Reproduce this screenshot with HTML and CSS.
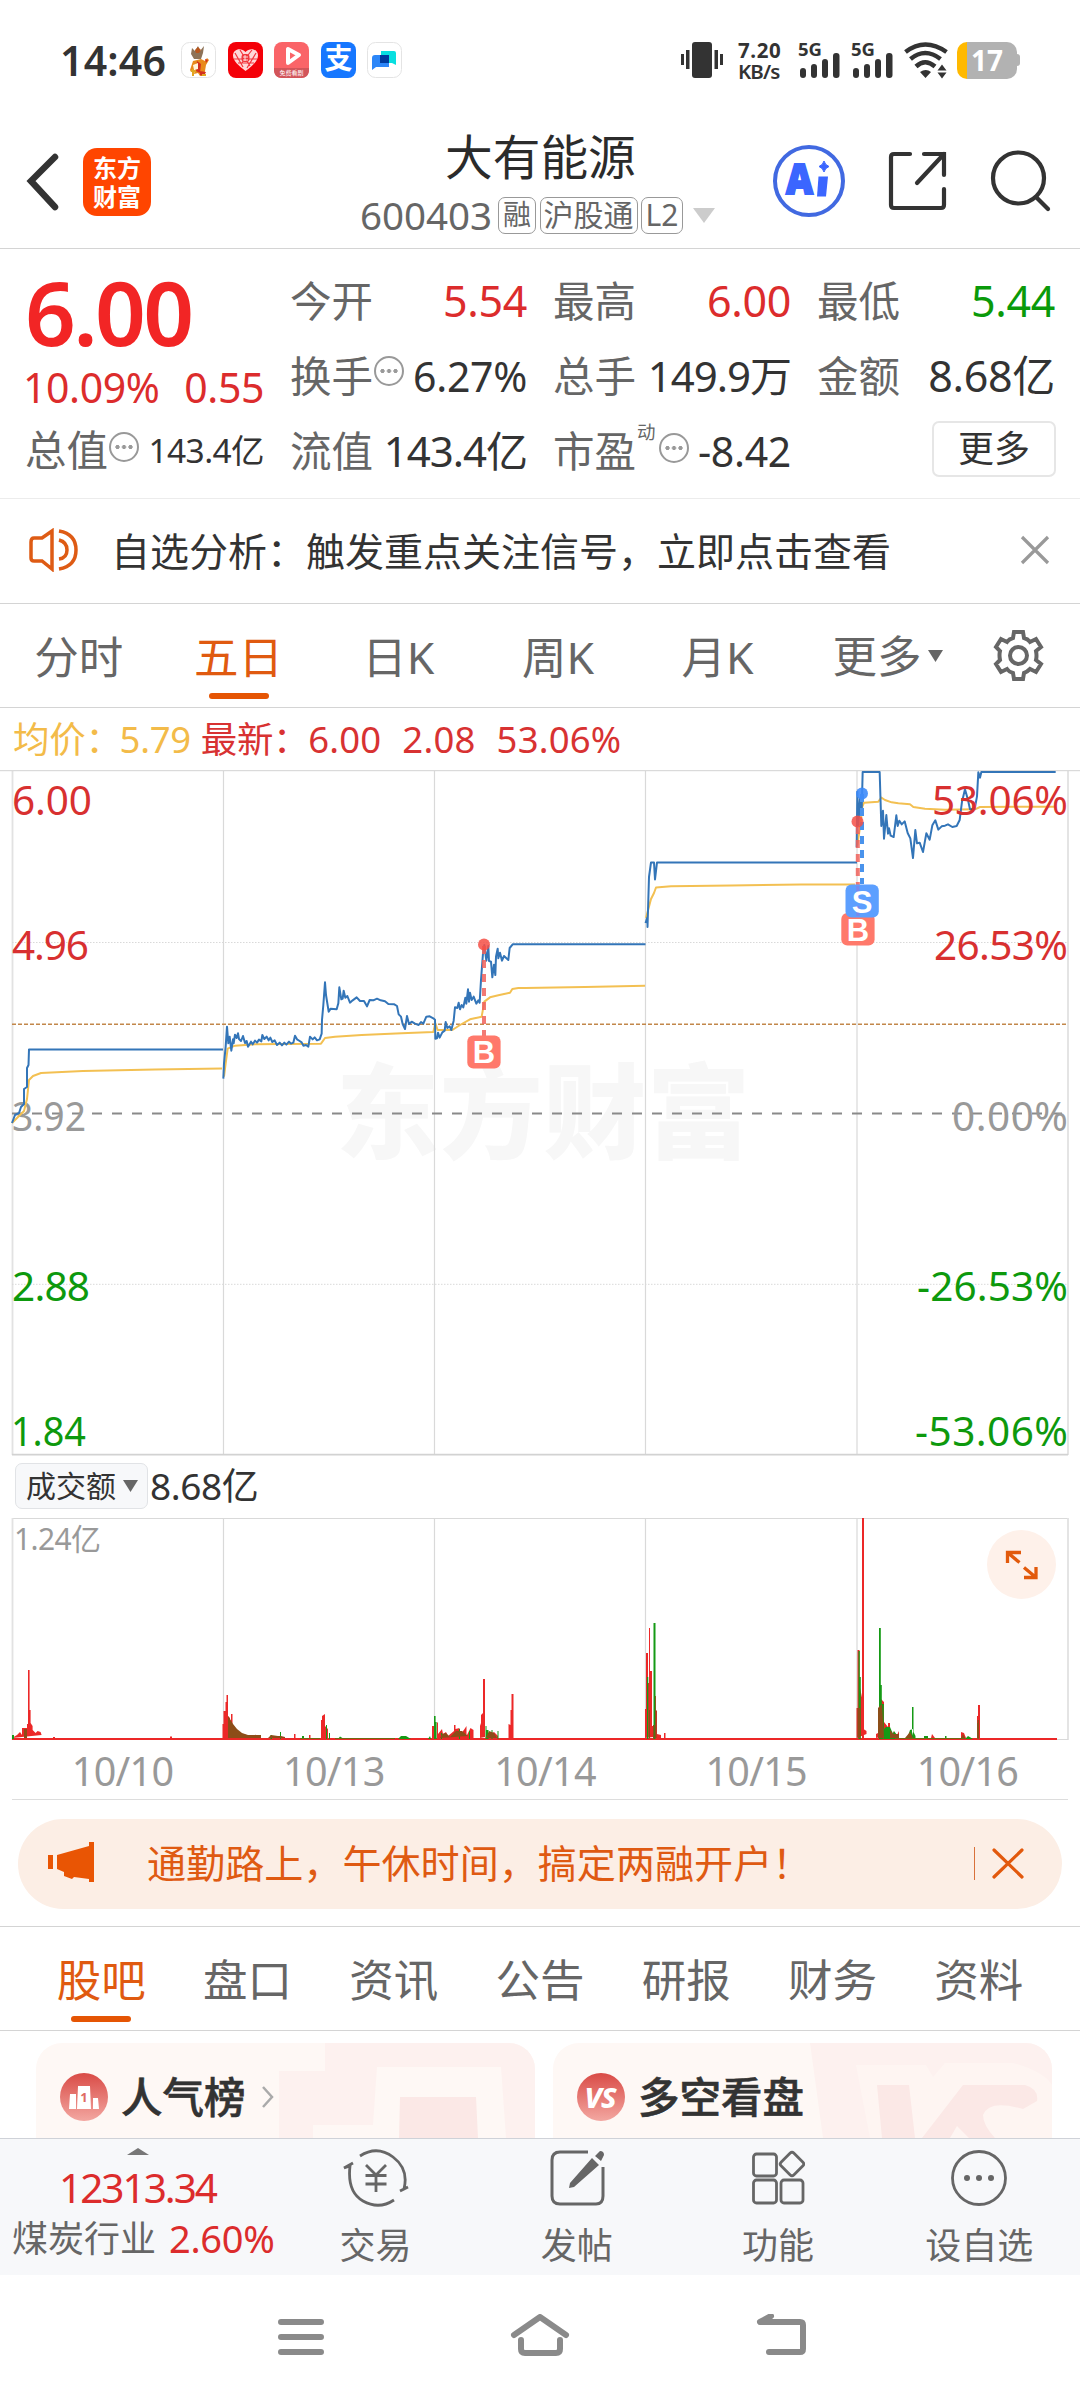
FILE: index.html
```html
<!DOCTYPE html>
<html lang="zh-CN">
<head>
<meta charset="utf-8">
<title>大有能源 600403</title>
<link rel="stylesheet" href="styles.css">
</head>
<body>
<div class="status">
  <span class="clock">14:46</span>
  <div class="apps">
    <svg width="35" height="36" viewBox="0 0 35 36"><rect x=".5" y=".5" width="34" height="35" rx="8" fill="#fff" stroke="#e4e4e4"/><path d="M11 6l3 3 3-5 2 5 4-5-1 7-2 6h-7l-3-5z" fill="#8d7257"/><path d="M14 8l3-3 3 3-2 3h-3z" fill="#b8571d"/><path d="M12 19l8-2 4 2 2-3 2 2-3 5-1 6-1 5h-4l-2-3-4 1 1-6-4 4-1-2z" fill="#e88a1c"/><path d="M16 19l4 3-1 9-4-2zM24 17l3 1-2 3M19 29l6 1-2 4-4-1z" fill="#d2301f"/><path d="M12 23l5-2v6l-4 1z" fill="#fff4dd"/><path d="M10 29h5M12 27v7M21 33h4" stroke="#e0a623" stroke-width="2"/></svg>
    <svg width="35" height="36" viewBox="0 0 35 36"><rect width="35" height="36" rx="8" fill="#f40008"/><path d="M17.500 29C11 24 5 19 5 13.500 5 7 13 5 17.500 10 22 5 30 7 30 13.500 30 19 24 24 17.500 29z" fill="#ffd8d8"/><path d="M7 11l8 14M12 8l10 16M28 11l-9 15M24 8L13 22M6 17h23M10 21h16" stroke="#f2353c" stroke-width="1.200"/><rect x="13.500" y="12" width="8" height="8" rx="3" fill="#f1373c"/><path d="M15 15h5M15 18h5M17 13v6" stroke="#fff" stroke-width=".8"/></svg>
    <svg width="35" height="36" viewBox="0 0 35 36"><rect width="35" height="36" rx="8" fill="#fa6468"/><path d="M0 26h35v2c0 5-3 8-8 8H8c-5 0-8-3-8-8z" fill="#d2555a"/><path d="M14 7v14l11-8z" fill="none" stroke="#fff" stroke-width="4" stroke-linejoin="round"/><text x="17.500" y="33" class="micro">免费看剧</text></svg>
    <svg width="35" height="36" viewBox="0 0 35 36"><rect width="35" height="36" rx="8" fill="#1677ff"/><text x="17.500" y="27" class="zhi">支</text></svg>
    <svg width="35" height="36" viewBox="0 0 35 36"><rect x=".5" y=".5" width="34" height="35" rx="8" fill="#fff" stroke="#e4e4e4"/><path d="M14 9h13q2 0 2 2v12l-4-2H14z" fill="#08dfe0"/><path d="M8 13h14v12H9l-4 3V16q0-3 3-3z" fill="#2c86f8"/><path d="M13 13h9v8h-9z" fill="#003a9c"/></svg>
  </div>
  <div class="signals">
    <svg width="42" height="36" viewBox="0 0 42 36" fill="#333"><rect x="11" width="20" height="36" rx="3"/><path d="M0 12h3v11H0zM5 8h3.500v19H5zM33.500 8H37v19h-3.500zM39 12h3v11h-3z"/></svg>
    <div class="speed"><span>7.20</span><span>KB/s</span></div>
    <svg class="cell" width="43" height="36" viewBox="0 0 43 36" fill="#333"><text x="0" y="13.500" class="g5">5G</text><rect x="2" y="26" width="6" height="10" rx="3"/><rect x="13" y="22" width="6" height="14" rx="3"/><rect x="24" y="17" width="6" height="19" rx="3"/><rect x="35" y="11" width="6.500" height="25" rx="3"/></svg>
    <svg class="cell" width="43" height="36" viewBox="0 0 43 36" fill="#333"><text x="0" y="13.500" class="g5">5G</text><rect x="2" y="26" width="6" height="10" rx="3"/><rect x="13" y="22" width="6" height="14" rx="3"/><rect x="24" y="17" width="6" height="19" rx="3"/><rect x="35" y="11" width="6.500" height="25" rx="3"/></svg>
    <svg width="44" height="37" viewBox="0 0 44 37" fill="none" stroke="#333" stroke-width="4.500"><path d="M1.500 10Q21-5 42.500 10M6.500 17Q21 5 36.500 17M12 24.500Q21 16 31 24.500"/><path d="M16 30q6-4 11 0l-5.500 6zM33.500 28.500l4.500-6 4.500 6zM33.500 30.500l4.500 6 4.500-6z" fill="#333" stroke="none"/></svg>
    <div class="battery"><span>17</span></div>
  </div>
</div>

<header class="header">
  <svg class="back" width="34" height="58" viewBox="0 0 34 58"><path d="M29 4L5 28l24 26" fill="none" stroke="#333" stroke-width="6.500" stroke-linecap="round"/></svg>
  <div class="logo"><span>东方</span><span>财富</span></div>
  <div class="title">
    <h1>大有能源</h1>
    <div class="code"><span class="num">600403</span><span class="chip rong">融</span><span class="chip hgt">沪股通</span><span class="chip l2">L2</span><svg width="22" height="15" viewBox="0 0 22 15"><path d="M0 0h22L11 15z" fill="#ccc"/></svg></div>
  </div>
  <div class="actions">
    <svg width="74" height="76" viewBox="0 0 74 76"><circle cx="37" cy="38" r="34" fill="none" stroke="#4169e1" stroke-width="4"/><text class="ai" x="14" y="51" textLength="27" lengthAdjust="spacingAndGlyphs">A</text><path d="M46.500 33.500h9.500l-2 20h-9z" fill="#3b66ff"/><path d="M52 18q1 4 5 5.500-4 1.500-5 5.500-1-4-5-5.500 4-1.500 5-5.500z" fill="#3b66ff" stroke="#3b66ff"/></svg>
    <svg width="60" height="60" viewBox="0 0 60 60" fill="none" stroke="#333" stroke-width="4.200" stroke-linecap="round"><path d="M22 3H6q-3 0-3 3v48q0 3 3 3h47q3 0 3-3V38M36 3h20v21M56 3L29 32"/></svg>
    <svg width="62" height="64" viewBox="0 0 62 64" fill="none" stroke="#333" stroke-width="4.200" stroke-linecap="round"><circle cx="28.500" cy="29" r="25.500"/><path d="M46.500 48.500L58 60"/></svg>
  </div>
</header>

<section class="quote">
  <div class="q-main">
    <div class="price">6.00</div>
    <div class="change"><span>10.09%</span><span>0.55</span></div>
    <div class="cell-row"><span class="lbl">总值</span><i class="info"></i><b class="v34">143.4亿</b></div>
  </div>
  <div class="q-col">
    <div class="cell-row"><span class="lbl">今开</span><b class="red">5.54</b></div>
    <div class="cell-row"><span class="lbl">换手</span><i class="info up"></i><b class="v41">6.27%</b></div>
    <div class="cell-row"><span class="lbl">流值</span><b class="tight">143.4亿</b></div>
  </div>
  <div class="q-col">
    <div class="cell-row"><span class="lbl">最高</span><b class="red">6.00</b></div>
    <div class="cell-row"><span class="lbl">总手</span><b class="tight">149.9万</b></div>
    <div class="cell-row"><span class="lbl">市盈</span><sup>动</sup><i class="info"></i><b class="v41">-8.42</b></div>
  </div>
  <div class="q-col">
    <div class="cell-row"><span class="lbl">最低</span><b class="green">5.44</b></div>
    <div class="cell-row"><span class="lbl">金额</span><b>8.68亿</b></div>
    <div class="cell-row"><span class="more">更多</span></div>
  </div>
</section>

<section class="notice">
  <svg width="50" height="44" viewBox="0 0 50 44" fill="none" stroke="#de5b14" stroke-width="3.500"><path d="M23 3v38l-10-8H5q-3 0-3-3V14q0-4 3-4h8zM30 3q17 3 17 19T30 41M30 12q8 2 8 10t-8 9"/></svg>
  <span class="notice-text">自选分析：触发重点关注信号，立即点击查看</span>
  <svg width="30" height="30" viewBox="0 0 30 30"><path d="M2 2l26 26M28 2L2 28" stroke="#999" stroke-width="3.200"/></svg>
</section>

<nav class="period">
  <span>分时</span><span class="on">五日</span><span>日K</span><span>周K</span><span>月K</span>
  <span class="p-more">更多<svg width="15" height="12" viewBox="0 0 15 12"><path d="M0 0h15L7.500 12z" fill="#666"/></svg></span>
  <svg class="gear" width="54" height="54" viewBox="0 0 54 54" fill="none" stroke="#666" stroke-width="4"><path d="M23 3h9l1 6q4 1 6 4l6-3 5 8-5 4q1 5 0 9l5 4-5 8-6-3q-3 3-6 4l-1 6h-9l-1-6q-4-1-6-4l-6 3-5-8 4-4q-1-5 0-9l-4-4 5-8 6 3q2-3 6-4z"/><circle cx="27.500" cy="26.500" r="8.500"/></svg>
</nav>

<div class="legend"><span class="avg">均价：</span><span class="avg v">5.79</span><span class="n">最新：</span><span>6.00</span><span>2.08</span><span>53.06%</span></div>

<svg class="chart" width="1080" height="693" viewBox="0 770 1080 693">
  <text class="mark" x="336" y="1151" textLength="414">东方财富</text>
  <g stroke="#d9d9d9" fill="none">
    <path d="M223.500 771v684M434.500 771v684M645.500 771v684M857 771v684" stroke-width="1.200"/>
    <path d="M12.500 771v684M1068 771v684" stroke-width="1.800" stroke="#e2e2e2"/>
    <path d="M0 770.700h1080" stroke="#d2d2d2"/>
    <path d="M12 1454.700h1056" stroke-width="1.800" stroke="#d2d2d2"/>
    <path d="M12 942.500h1056M12 1284.300h1056" stroke-dasharray="1.500 1.500"/>
  </g>
  <path d="M12 1113.500h1056" stroke="#8a8a8a" stroke-width="2" stroke-dasharray="10 10" fill="none"/>
  <path d="M12 1024.300h1056" stroke="#c2874a" stroke-width="1.500" stroke-dasharray="4 2" fill="none"/>
  <g class="lab red-t">
    <text x="12" y="815" textLength="80">6.00</text><text x="12" y="960" textLength="77">4.96</text>
  </g>
  <g class="lab gray-t"><text x="12" y="1131" textLength="74" lengthAdjust="spacingAndGlyphs">3.92</text></g>
  <g class="lab green-t"><text x="12" y="1301" textLength="78">2.88</text><text x="11" y="1446" textLength="75" lengthAdjust="spacingAndGlyphs">1.84</text></g>

  <g class="avgline">
    <path d="M12 1123l6-6 6-6 3-12 2-19 4-4 8-3 42-2 72-1.500 67-1"/>
    <g transform="translate(215 930) scale(.33333)">
      <path d="M27 440L32 400 38 356 60 347 120 343 200 342 318 341 330 324 360 320 440 315 560 310 655 306 661 280 668 300 712 300 735 285 765 268 800 260 808 215 825 202 850 196 885 188 892 177 910 174 930 174"/>
    </g>
    <path d="M525 988l60-1 60-1.300M646 918l5-19 3-6 2-5.500 15-1.200 60-.8 70-1 54 0"/>
    <g transform="translate(845 765) scale(.33333)">
      <path d="M37 240L46 180 52 125 57 113 100 110 109 98 120 105 140 112 160 115 195 118 205 126 240 131 300 134 390 133 405 126 632 125"/>
    </g>
  </g>
  <g class="priceline">
    <path d="M12 1123l3-8 4-2 2-6 3-3 0-15 3-2 0-19 1.500-3 .5-15.500h194"/>
    <g transform="translate(215 930) scale(.33333)">
      <path d="M25 446L27 400 32 350 36 290 40 340 44 320 49 362 54 328 56 340 60 314 65 324 69 310 72 327 78 333 84 318 90 339 95 333 99 350 108 335 113 343 120 332 126 338 132 329 139 334 142 315 148 327 155 320 161 331 166 323 172 336 179 331 186 345 194 338 201 346 208 338 214 344 222 335 228 341 235 338 240 317 246 328 254 333 260 337 265 347 273 345 280 350 285 320 293 328 299 322 306 331 314 328 320 311 321 270 325 225 330 157 333 195 341 245 347 236 365 238 370 220 373 172 379 208 383 206 386 182 391 203 397 198 405 218 413 211 425 202 435 213 447 213 456 229 464 210 475 211 486 206 497 211 510 214 520 222 538 223 546 228 551 253 558 260 563 282 570 297 576 258 582 282 590 275 600 281 611 285 618 276 625 281 634 260 644 259 655 265 660 269 661 326 666 325 669 308 674 323 682 307 689 302 692 276 697 294 704 289 709 300 716 272 720 232 727 234 731 218 735 238 740 225 745 232 751 203 754 221 759 178 762 215 765 188 770 210 776 200 784 221 790 211 794 218 798 150 804 70 808 45 814 92 820 48 822 93 828 95 832 142 837 104 841 135 843 80 848 56 850 85 855 68 861 92 867 78 880 90 884 54 893 43 930 43"/>
    </g>
    <path d="M525 944.300h120.500M645.500 923l2-6v10l1.500-50 2-14.500h3l1 17 2-17h200"/>
    <g transform="translate(845 765) scale(.33333)">
      <path d="M35 247L37 80 40 180 45 100 50 140 53 21 104 21 109 183 114 137 117 221 124 150 129 206 132 190 137 212 146 216 154 151 158 183 163 167 170 178 179 169 188 204 196 220 204 279 211 195 216 235 224 233 234 261 244 205 254 224 262 181 271 166 280 194 290 184 300 182 309 178 322 186 335 183 344 165 351 110 360 73 369 105 375 133 389 132 396 94 400 22 405 38 409 21 632 21"/>
    </g>
  </g>
  <g class="lab red-t" text-anchor="end">
    <text x="1068" y="815" textLength="136">53.06%</text><text x="1068" y="960" textLength="134">26.53%</text>
  </g>
  <g class="lab gray-t" text-anchor="end"><text x="1068" y="1131" textLength="116">0.00%</text></g>
  <g class="lab green-t" text-anchor="end"><text x="1068" y="1301" textLength="151">-26.53%</text><text x="1068" y="1446" textLength="153">-53.06%</text></g>
  <g stroke-width="4" stroke-dasharray="8 6">
    <path d="M484 946v90M857.800 826v60" stroke="#f0635c" opacity=".85"/><path d="M862 794v90" stroke="#4a93ec"/>
  </g>
  <circle cx="484" cy="944.500" r="6" fill="#f54f45" opacity=".85"/>
  <circle cx="857.500" cy="821.500" r="6" fill="#f54f45" opacity=".85"/>
  <circle cx="862" cy="793.500" r="6" fill="#3d8bfa" opacity=".9"/>
  <g class="badge">
    <rect x="467.300" y="1035.500" width="33.300" height="33" rx="6" fill="#ff796b"/><text x="484" y="1063">B</text>
    <rect x="841.300" y="913" width="33.300" height="32.500" rx="6" fill="#ff796b"/><text x="858" y="941">B</text>
    <rect x="845.500" y="884.500" width="33.300" height="33" rx="6" fill="#5c9fff"/><path d="M857.800 886v10M857.800 906v10" stroke="#8d7be0" stroke-width="3" opacity=".6"/><text x="862" y="912.500">S</text>
  </g>
</svg>

<div class="vol-head"><span class="vol-pick">成交额<svg width="15" height="12" viewBox="0 0 15 12"><path d="M0 0h15L7.500 12z" fill="#666"/></svg></span><span>8.68亿</span></div>

<div class="vol">
<svg width="1080" height="223" viewBox="0 1518 1080 223">
  <g fill="none" stroke="#d9d9d9"><path d="M12 1518.500h1056M857 1518v222" stroke-width="1.200"/><path d="M223.500 1518v222M434.500 1518v222M645.500 1518v222" stroke-width="1.200"/><path d="M12.500 1518v222M1068 1518v222" stroke-width="1.800" stroke="#e2e2e2"/><path d="M1056 1739.500h12"/></g>
  <text class="vmax" x="14" y="1550">1.24亿</text>
  <g fill="#ec2828">
    <path d="M12 1738h1045v2H12z"/>
    <path d="M12 1738l5-3 3-3 2 3v-7h5v-4h1v-54h1.600v40h1v13l2 3v4l3 3 2-2 3 1 1 3z"/>
    <path d="M222.500 1738v-14h1v-13h2v-9h1v-7h1.500v21l2 2v6l1-4v-6h1.500v10l2 3v5l4-1v5l6-2 4 3 6 0 1-3v5zM294 1738v-4h1.500v4zM309 1738v-3h1.500v3zM321 1738v-18h1v-4l3-2v12l3 3v9zM432 1738v-12h2v12zM437 1738v-15l1-1v12l4-5 1 5 3-2 2 4 6-5v-6h1.500v4l4-1v8l5-7 2-3v10l4-8 3 2v9zM480 1738v-12l1-3v-8l2-2v-34h2v58zM485 1738l9-6 4 4v2zM508.500 1738v-14l2 1v-15h1v-16h2v44z"/>
    <path d="M645 1738v-29h1v-56h2v30h1v-55h1v43h2v55h1v11zM654 1738v-42h2v15h1v23l4 1v3zM664 1738v-5h1.500v5zM856.500 1738v-30h1v-58h2v35l2 10 1 5v16h1v13l3 2v3zM862 1738v-220h2v220zM876 1738v-4l2-1v-22h3v-12l3 3v20l4 5v-4h2v12zM892 1738l1-7 3 6 3-6v7zM931 1738l1-4 3 4zM961 1738v-6l3 1 2 5zM977 1738v-22h1v-11h2v33zM53 1738v-1h2v1zM170 1738v-1.500h2v1.500z"/>
  </g>
  <g fill="#159a15">
    <path d="M12 1739v-4h2v4zM280 1739v-7h1v7zM270.500 1739v-4h1.500v4zM302 1739v-3h2v3zM326 1739v-14h1v14zM329 1739v-6h1v6zM338 1739l2-2.500 4 2.500zM398 1739l3-3 5 0 5 3zM428 1739l2-3 1 3zM434 1739v-23h1.600v6h1v17zM441 1739v-6h1v6zM459 1739v-10h1v10zM469 1739v-8h1v8zM485.500 1739v-13h1v4h2v9zM491.500 1739v-9h1v9zM497.500 1739v-8h1v8z"/>
    <path d="M647 1739v-62h1.300v62zM653.500 1739v-116h2v116zM858.500 1739v-88h1.300v26h1v62zM879 1739v-111h1.800v57h1v19h2v35zM884 1739v-10l2-2h4l3 7 1-3 3 4v4zM911 1739l2-7v-3l-3 1-3 9M912 1739v-32h1.500v25l2 4v3zM924 1739v-3h4v3zM945 1739v-3h1.500v3zM977.500 1739v-16h1v16zM965 1739l3-3 5 3z"/>
  </g>
  <g fill="#8c4d18">
    <path d="M24 1738v-9h3v9zM228 1738v-22l2 3 3 5 4 5 5 4 6 2 13 0 0 3zM268 1738l3-3 7 1 3 0 4 1 0 1zM649 1738v-28h1v28zM653 1738v-13h1.500v13zM655 1738v-28h1.500v28zM857.500 1738v-30h3v30zM878 1738v-30l4-4 2 34zM890 1738v-8l3 4 6 0 0 4zM905 1738l5-6 3 6zM977.500 1738v-18h1.500v18zM486 1738l3-7 5 2 3 5zM440 1738l2-4 4-1 4 4 6-6 6 0 6 5zM961 1738l2-4 2 4z"/>
  </g>
  <path d="M300 1738.500h20M335 1738.500h60M895 1738.500h70" stroke="#6f6a12"/>
</svg>
<span class="expand"><svg width="36" height="32" viewBox="0 0 36 32" fill="none" stroke="#e25a0c" stroke-width="3.300"><path d="M3.500 14V3.500H17M3.500 3.500l12 10M32 18v10.500H20M32 28.500l-12-10"/></svg></span>
</div>
<div class="dates"><span>10/10</span><span>10/13</span><span>10/14</span><span>10/15</span><span>10/16</span></div>

<div class="banner">
  <svg width="46" height="42" viewBox="0 0 46 42" fill="#e95504"><path d="M0 13h5v14H0zM9 13l32-9V0h5v40h-5v-3l-15-2-2 2-8-3v-4l-7-3z"/></svg>
  <span class="banner-text">通勤路上，午休时间，搞定两融开户！</span>
  <i class="bar"></i>
  <svg width="32" height="31" viewBox="0 0 32 31"><path d="M2 2l28 27M30 2L2 29" stroke="#e2590d" stroke-width="3.200" stroke-linecap="round"/></svg>
</div>

<nav class="tabs"><span class="on">股吧</span><span>盘口</span><span>资讯</span><span>公告</span><span>研报</span><span>财务</span><span>资料</span></nav>

<section class="cards">
  <div class="card">
    <svg class="deco" width="499" height="95" viewBox="0 0 499 95"><defs><linearGradient id="rd" x1="0" y1="0" x2="0" y2="1"><stop offset="0" stop-color="#d94b46"/><stop offset="1" stop-color="#f3a7a1"/></linearGradient></defs><path d="M243 95V28h46V0h210v95h-29l-5-71H341l-4 58h-60v13z" fill="#fdf1ef"/><path d="M364 54h76l2 41h-79z" fill="#fbe8e6"/></svg>
    <svg class="ico" width="48" height="48" viewBox="0 0 48 48"><circle cx="24" cy="24" r="24" fill="url(#rd)"/><path d="M10 21h6v15H9zM18 13h12l1 23H17zM33 25h5l1 11h-6z" fill="#fff"/><text class="one" x="24" y="29">1</text></svg>
    <strong>人气榜</strong>
    <svg class="chev" width="14" height="24" viewBox="0 0 14 24"><path d="M2 2l9 10-9 10" fill="none" stroke="#aaa" stroke-width="2.500"/></svg>
  </div>
  <div class="card">
    <svg class="deco" width="499" height="95" viewBox="0 0 499 95"><path d="M257 0h242v95H270z" fill="#fdf1ef"/><path d="M303 22h70l7 12 12-14h68q30 8 39 22v53H317z" fill="#fef5f2"/><path d="M324 42h32l6 53h-33zM410 42h62q14 4 12 16l-14 8q-34-10-40 6 0 10 12 23h-26l-12-12-7 12h-28z" fill="#fbe8e6"/></svg>
    <svg class="ico" width="48" height="48" viewBox="0 0 48 48"><circle cx="24" cy="24" r="24" fill="url(#rd)"/><text class="vs" x="23" y="35">VS</text></svg>
    <strong>多空看盘</strong>
  </div>
</section>

<footer class="dock">
  <div class="index">
    <svg width="22" height="7" viewBox="0 0 22 7"><path d="M0 7L11 0l11 7z" fill="#777"/></svg>
    <span class="idx">12313.34</span>
    <div class="ind"><span>煤炭行业</span><b>2.60%</b></div>
  </div>
  <div class="item"><svg width="66" height="60" viewBox="0 0 66 60" fill="none" stroke="#666" stroke-width="2.800"><path d="M17 8Q34-3 50 9t11 32l-4 2 8-4M51 52Q36 62 20 53T7 18l-6 2 9-5"/><path d="M23 17l10 10 10-10M33 27v17M22.500 27.500h21M22.500 36h21"/></svg><span>交易</span></div>
  <div class="item"><svg width="58" height="60" viewBox="0 0 58 60" fill="none" stroke="#666" stroke-width="3"><path d="M40 4H12Q4 4 4 12v36q0 8 8 8h36q7 0 7-8V19"/><path d="M44 10l7 7-25 22-5 1 1-5zM47 8l5-5q4 0 4 4l-3 6z" fill="#666" stroke="none"/></svg><span>发帖</span></div>
  <div class="item"><svg width="54" height="60" viewBox="0 0 54 60" fill="none" stroke="#666" stroke-width="2.800"><rect x="2.500" y="6" width="23" height="22" rx="3"/><rect x="2.500" y="32" width="23" height="23" rx="3"/><rect x="30" y="32" width="22" height="23" rx="3"/><rect x="32" y="7" width="18" height="18" rx="2.500" transform="rotate(45 41 16)"/></svg><span>功能</span></div>
  <div class="item"><svg width="58" height="60" viewBox="0 0 58 60"><circle cx="29" cy="30" r="26.500" fill="none" stroke="#666" stroke-width="2.800"/><g fill="#666"><circle cx="17" cy="30" r="3"/><circle cx="29" cy="30" r="3"/><circle cx="41" cy="30" r="3"/></g></svg><span>设自选</span></div>
</footer>

<div class="sysnav">
  <svg width="46" height="46" viewBox="0 0 46 46"><path d="M3 8h40M3 23h40M3 38h40"/></svg>
  <svg width="60" height="46" viewBox="0 0 60 46"><path d="M4 21L30 3l26 18M11 26v9q0 4 4 4h31q4 0 4-4v-9"/></svg>
  <svg width="50" height="46" viewBox="0 0 50 46"><path d="M15 2L4 8h40q3 0 3 3v24q0 3-3 3H13"/></svg>
</div>
</body>
</html>
```

FILE: styles.css
```css
* { box-sizing: border-box; }
body {
  margin: 0;
  width: 1080px;
  height: 2400px;
  overflow: hidden;
  background: #fff;
  color: #333;
  font-family: "Noto Sans", "Noto Sans CJK SC", sans-serif;
  line-height: 1;
}
svg { display: block; flex: none; }
b { font-weight: 400; }
span, b, strong { white-space: nowrap; }

/* status bar */
.status { height: 114px; padding: 42px 60px 0 60px; display: flex; align-items: flex-start; }
.clock { width: 121px; font-size: 41px; font-weight: 600; line-height: 36px; letter-spacing: .2px; }
.apps { display: flex; gap: 11.500px; }
.apps svg { overflow: visible; }
.micro { font-size: 6px; fill: #fff; text-anchor: middle; }
.zhi { font-size: 28px; font-weight: 700; fill: #fff; text-anchor: middle; }
.signals { margin-left: auto; display: flex; align-items: flex-start; }
.speed { width: 44px; margin: -2px 16px 0 15px; display: flex; flex-direction: column; font-size: 20.500px; font-weight: 700; line-height: 21px; letter-spacing: .6px; }
.speed span + span { letter-spacing: -.9px; font-weight: 600; }
.cell { overflow: visible; margin-right: 10px; }
.g5 { font-size: 18.500px; font-weight: 700; }
.battery { position: relative; width: 60px; height: 37px; margin: 0 3px 0 9px; border-radius: 10px; background: linear-gradient(90deg, #ffb900 10px, #b2b2b2 10px); color: #fff; text-align: center; font-size: 28px; font-weight: 700; line-height: 37px; }
.battery::after { content: ""; position: absolute; left: 60px; top: 12px; width: 3px; height: 12px; background: #b2b2b2; border-radius: 0 3px 3px 0; }

/* title bar */
.header { height: 135px; border-bottom: 1px solid #d4d4d4; display: flex; align-items: flex-start; }
.back { margin: 39px 0 0 26px; }
.logo { width: 68px; height: 68px; margin: 34px 0 0 23px; padding-top: 5px; border-radius: 14px; background: #ff4500; color: #fff; display: flex; flex-direction: column; align-items: center; font-size: 24px; font-weight: 700; line-height: 29px; }
.title { width: 366px; margin-left: 208px; }
h1 { margin: 14px 0 0 86px; font-size: 47.700px; font-weight: 400; line-height: 58px; color: #2b2b2b; white-space: nowrap; }
.code { display: flex; align-items: center; height: 58px; color: #666; }
.num { width: 139px; font-size: 38.500px; line-height: 56px; padding-left: 1px; }
.chip { height: 37px; margin-right: 3.500px; border: 1.500px solid #999; border-radius: 7px; text-align: center; font-size: 30px; line-height: 33px; }
.rong { width: 38px; font-size: 28px; }
.hgt { width: 98px; }
.l2 { width: 42px; margin-right: 10px; }
.actions { display: flex; align-items: center; padding-top: 29px; margin-left: 47px; }
.actions svg + svg { margin-left: 42px; }
.ai { font-family: "Open Sans", sans-serif; font-size: 43px; font-weight: 800; fill: #3b66ff; stroke: #3b66ff; stroke-width: 2; }

/* quote grid */
.quote { height: 250px; border-bottom: 1px solid #ececec; padding: 14px 25px 0 25px; display: grid; grid-template-columns: 239px 237px 238px 238px; column-gap: 26px; }
.price { height: 94px; margin-left: 0; color: #f22525; font-size: 89px; font-weight: 600; line-height: 97px; letter-spacing: -2.700px; }
.change { height: 55px; display: flex; justify-content: space-between; color: #dc2c2c; font-size: 41px; line-height: 61px; letter-spacing: -.4px; }
.change span:first-child { margin-left: -2px; }
.cell-row { height: 75px; display: flex; align-items: center; position: relative; }
.lbl { font-size: 41.500px; line-height: 76px; color: #666; }
.cell-row b { margin-left: auto; font-size: 43px; line-height: 76px; letter-spacing: -.3px; }
.cell-row .v34 { font-size: 33.500px; letter-spacing: -.6px; }
.cell-row .v41 { font-size: 41px; }
.cell-row .tight { font-size: 42px; letter-spacing: -1px; }
.red { color: #dc2c2c; }
.green { color: #0a9a0a; }
.info { width: 30px; height: 30px; flex: none; margin: 0 0 6px 1px; border: 2px solid #999; border-radius: 50%; background: radial-gradient(circle, #999 1.800px, transparent 2.300px) 50% 50% / 6.500px 26px repeat-x content-box; padding: 0 3px; }
.info.up { margin-bottom: 9px; }
sup { font-size: 18.500px; line-height: 20px; color: #666; margin: 0 2px 38px 1px; }
.more { margin: -3px 0 0 auto; width: 124px; height: 56px; position: relative; left: 1px; border: 2px solid #e6e6e6; border-radius: 7px; text-align: center; font-size: 36px; line-height: 51px; color: #333; }

/* notice */
.notice { height: 105px; border-bottom: 1px solid #d4d4d4; display: flex; align-items: center; padding: 0 30px 2px 29px; }
.notice-text { flex: 1; margin-left: 32px; font-size: 39px; }

/* period tabs */
.period { height: 104px; border-bottom: 1px solid #d4d4d4; display: flex; color: #666; font-size: 44.500px; line-height: 106px; }
.period > span { width: 159.700px; text-align: center; position: relative; left: -1px; }
.period .on, .tabs .on { color: #e05a10; }
.on::after { content: ""; position: absolute; left: 50%; bottom: 8px; width: 60px; height: 6px; margin-left: -30px; border-radius: 3px; background: #e55504; }
.period .p-more { display: flex; align-items: center; justify-content: center; gap: 7px; width: 181px; }
.gear { margin: 25px 0 0 12px; }

/* legend */
.legend { height: 62px; padding-left: 13px; display: flex; color: #d83232; font-size: 36.500px; line-height: 63px; }
.legend span { margin-right: 21px; letter-spacing: .2px; }
.legend .avg { color: #f3bb49; margin-right: -2px; letter-spacing: -.3px; }
.legend .v { margin-right: 10px; }
.legend .n { margin-right: -1px; letter-spacing: -.4px; }

/* price chart */
.mark { font-family: "Noto Sans CJK SC", sans-serif; font-size: 103px; font-weight: 900; fill: #f7f7f7; }
.lab { font-size: 40.500px; }
.red-t { fill: #d83030; }
.gray-t { fill: #999; }
.green-t { fill: #0d990d; }
.avgline path, .priceline path { fill: none; stroke-linejoin: round; vector-effect: non-scaling-stroke; }
.avgline path { stroke: #f3c052; stroke-width: 2px; }
.priceline path { stroke: #3375b8; stroke-width: 2px; }
.badge text { font-family: "Liberation Sans", sans-serif; font-size: 31px; font-weight: 700; fill: #fff; text-anchor: middle; }

/* turnover */
.vol-head { height: 55px; display: flex; align-items: flex-start; padding-left: 15px; font-size: 37px; line-height: 44px; }
.vol-head > span + span { letter-spacing: -.4px; margin-top: 1px; }
.vol-pick { width: 133px; height: 46px; margin-right: 2px; padding-left: 10px; display: flex; align-items: center; gap: 7px; border: 1px solid #e1e3e6; border-radius: 7px; background: #f7f8fa; font-size: 30px; }
.vol { position: relative; height: 223px; }
.vmax { font-size: 30px; letter-spacing: -.6px; fill: #999; }
.expand { position: absolute; left: 987px; top: 12px; width: 69px; height: 69px; border-radius: 50%; background: #fef1ea; display: flex; align-items: center; justify-content: center; }
.dates { height: 59px; margin: 0 12px; border-bottom: 1px solid #ddd; display: flex; color: #999; font-size: 39.500px; line-height: 61px; letter-spacing: -.7px; }
.dates span { flex: 1; text-align: center; padding-left: 10px; }

/* promo banner */
.banner { height: 90px; margin: 19px 18px 17px; padding: 0 38px 2px 30px; border-radius: 45px; background: #fceee5; display: flex; align-items: center; }
.banner-text { margin-left: 53px; color: #df5a12; font-size: 39.100px; }
.bar { width: 1.500px; height: 33px; margin: 0 17px 0 auto; background: #d9713a; }

/* content tabs */
.tabs { height: 105px; border-top: 1px solid #d4d4d4; border-bottom: 1px solid #d4d4d4; padding: 0 28px; display: flex; color: #666; font-size: 44.500px; line-height: 105px; }
.tabs span { flex: 1; text-align: center; position: relative; }

/* cards */
.cards { height: 107px; padding: 12px 28px 0 36px; display: flex; gap: 18px; }
.card { position: relative; width: 499px; height: 95px; padding-left: 24px; display: flex; align-items: center; border-radius: 26px 26px 0 0; overflow: hidden; background: #fef8f5; }
.card .deco { position: absolute; left: 0; top: 0; }
.card strong { position: relative; margin: 10px 15px 0 13px; font-size: 41.500px; font-weight: 500; font-family: "Noto Sans CJK SC", sans-serif; -webkit-text-stroke: .6px #333; }
.ico, .card .chev { position: relative; margin-top: 12px; }
.one { font-size: 13px; font-weight: 700; fill: #e06a64; text-anchor: middle; }
.vs { font-size: 29px; font-weight: 800; font-style: italic; fill: #fff; text-anchor: middle; letter-spacing: -1px; }

/* dock */
.dock { height: 137px; border-top: 1px solid #cfd2d8; background: #f7f8fa; display: flex; color: #666; }
.index { width: 275px; display: flex; flex-direction: column; align-items: center; padding-top: 9px; }
.idx { color: #dc2c2c; font-size: 40.500px; line-height: 42px; letter-spacing: -2px; margin-top: 12px; }
.ind { display: flex; align-self: flex-start; margin-left: 12px; font-size: 36px; line-height: 60px; }
.ind b { margin-left: 13px; color: #dc2c2c; font-size: 38px; line-height: 59px; letter-spacing: -.3px; }
.item { width: 201.200px; display: flex; flex-direction: column; align-items: center; padding-top: 9px; font-size: 36px; line-height: 36px; }
.item span { margin-top: 20px; }

/* system navigation */
.sysnav { height: 125px; display: flex; justify-content: center; gap: 186px; padding: 39px 0 0 3px; }
.sysnav path { fill: none; stroke: #8a8a8a; stroke-width: 6; stroke-linecap: round; stroke-linejoin: round; }
```
